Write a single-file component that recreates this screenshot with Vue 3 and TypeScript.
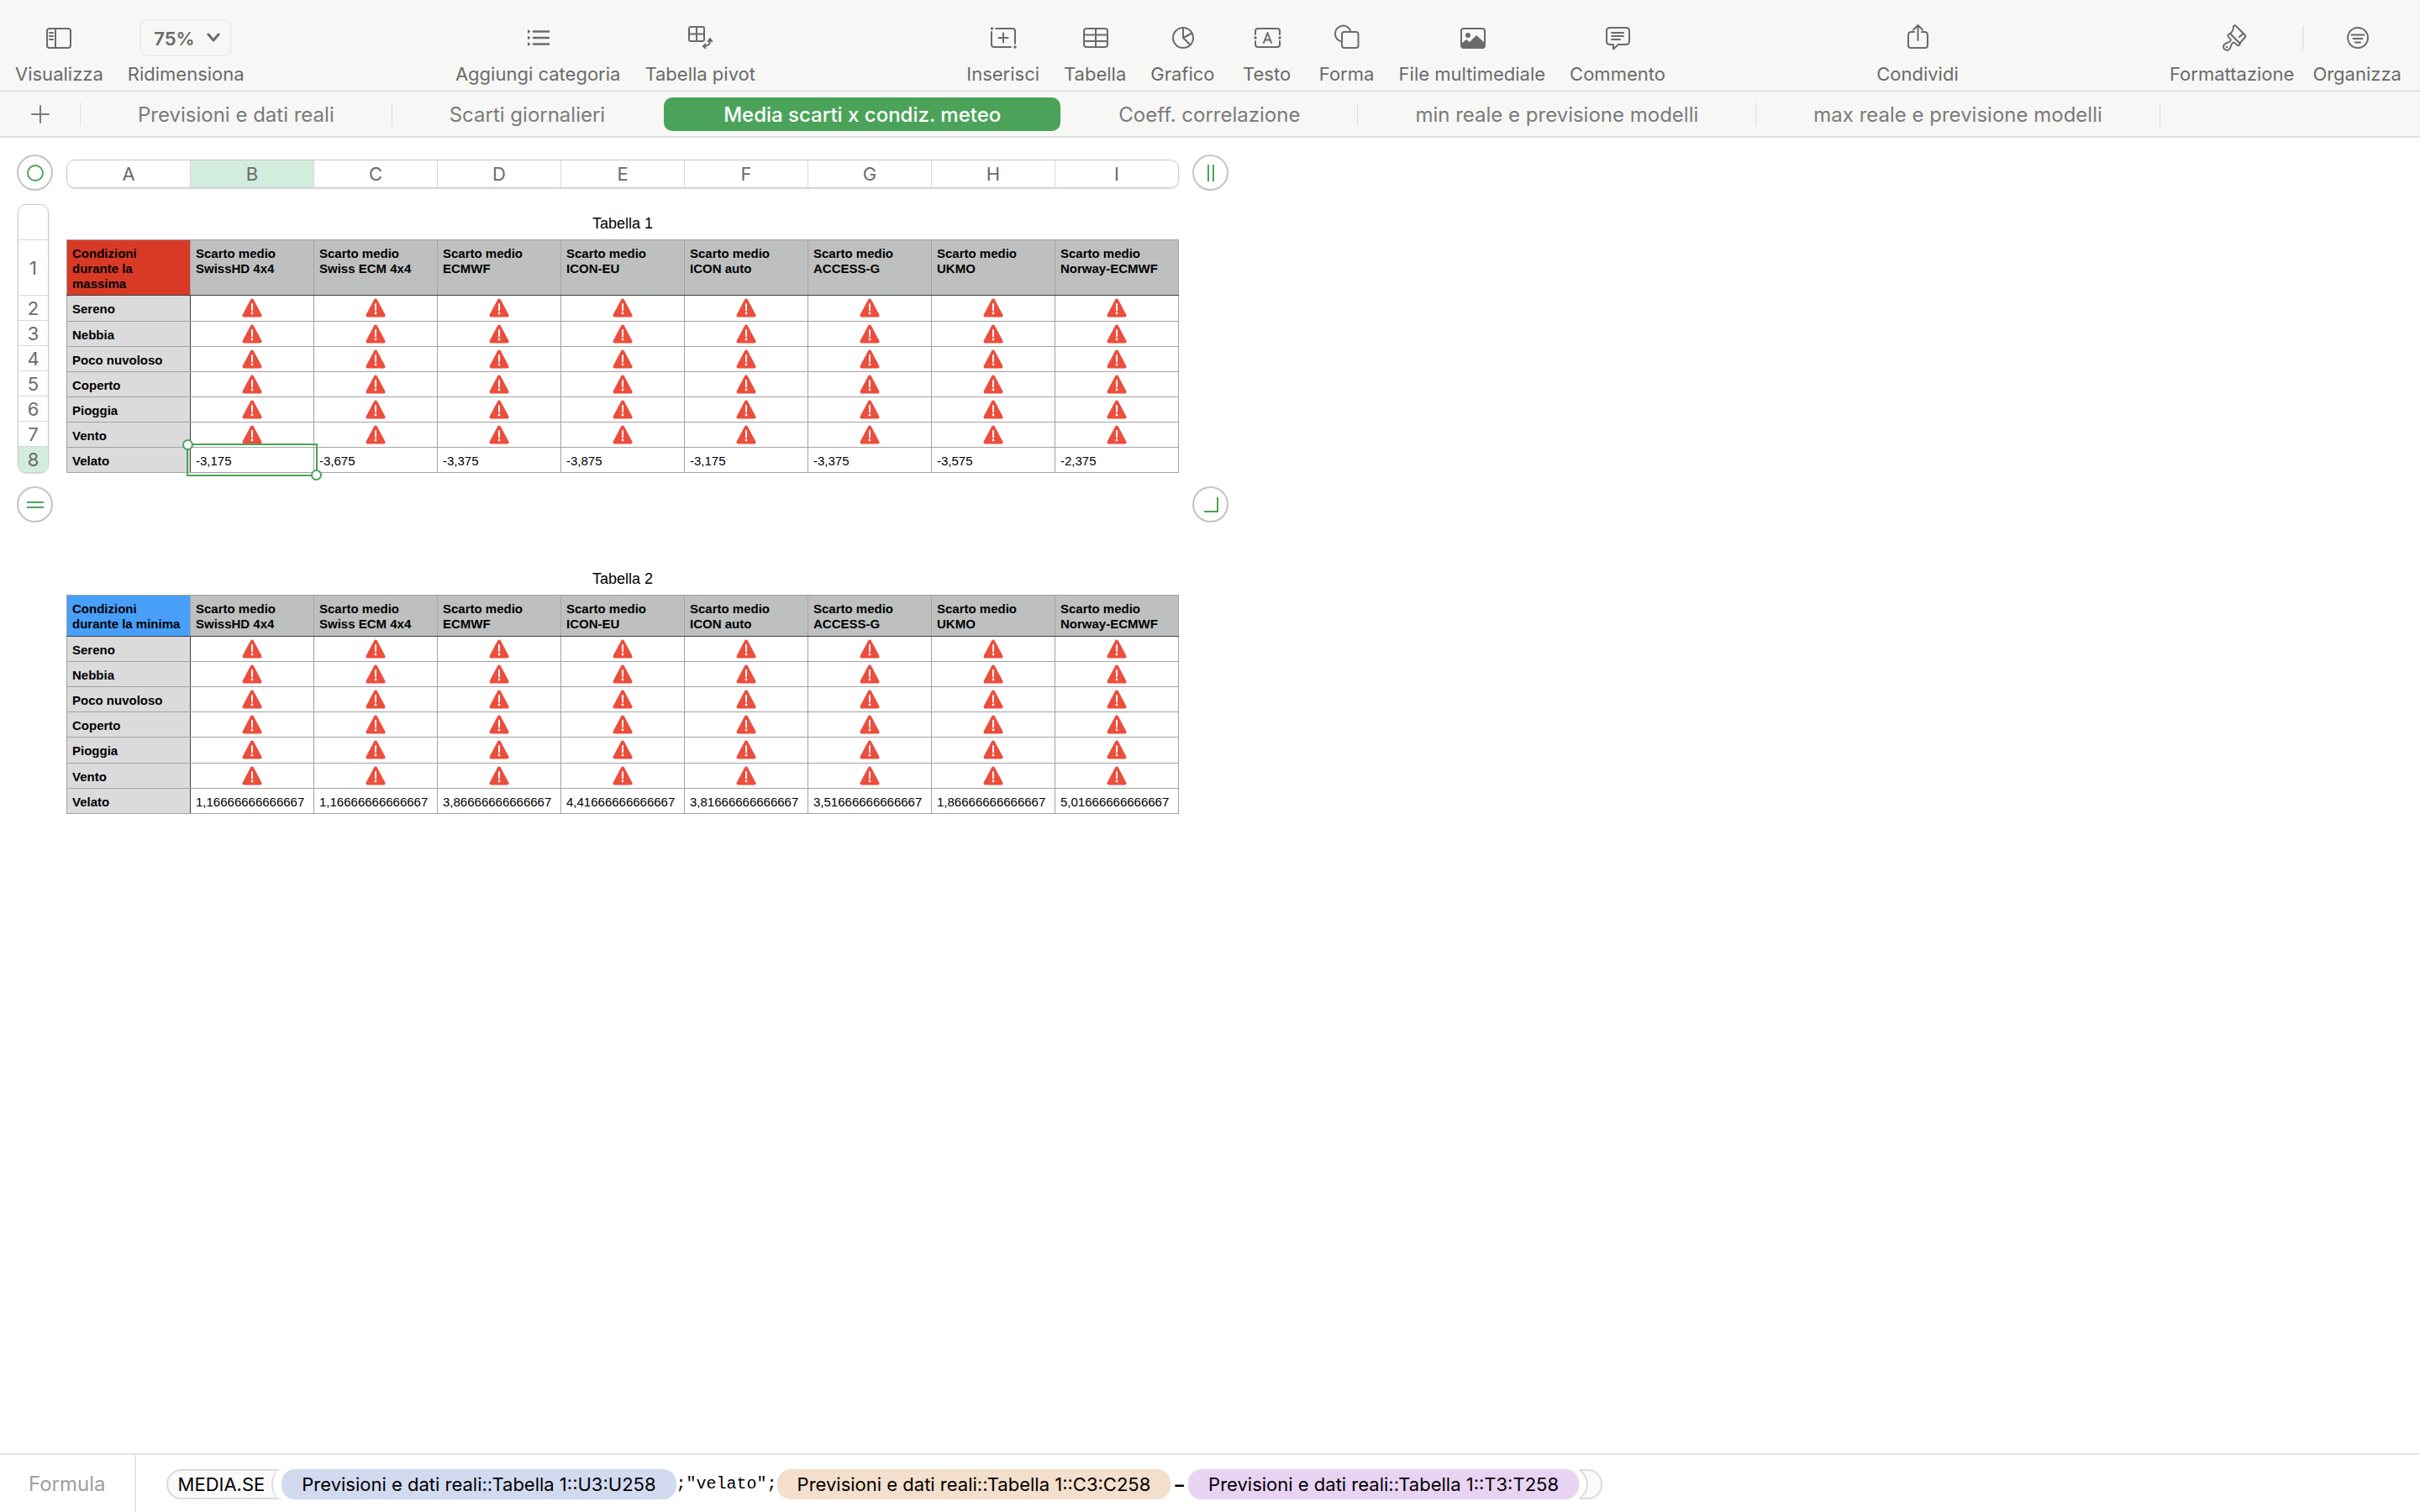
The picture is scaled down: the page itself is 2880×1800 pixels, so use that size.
<script setup lang="ts">
import { ref } from 'vue'

interface Sheet {
  id: string
  name: string
}

interface DataTable {
  title: string
  corner: string
  tone: 'red' | 'blue'
  tallRow: string
  values: string[]
  selected: number
}

type ToolIcon =
  | 'list' | 'pivot' | 'insert' | 'table' | 'chart' | 'text' | 'shape'
  | 'media' | 'comment' | 'share'

interface Tool {
  icon: ToolIcon
  label: string
}

const toolGroups: Tool[][] = [
  [
    { icon: 'list', label: 'Aggiungi categoria' },
    { icon: 'pivot', label: 'Tabella pivot' },
  ],
  [
    { icon: 'insert', label: 'Inserisci' },
    { icon: 'table', label: 'Tabella' },
    { icon: 'chart', label: 'Grafico' },
    { icon: 'text', label: 'Testo' },
    { icon: 'shape', label: 'Forma' },
    { icon: 'media', label: 'File multimediale' },
    { icon: 'comment', label: 'Commento' },
  ],
  [{ icon: 'share', label: 'Condividi' }],
]

const sheets: Sheet[] = [
  { id: 'previsioni', name: 'Previsioni e dati reali' },
  { id: 'scarti', name: 'Scarti giornalieri' },
  { id: 'media', name: 'Media scarti x condiz. meteo' },
  { id: 'coeff', name: 'Coeff. correlazione' },
  { id: 'min', name: 'min reale e previsione modelli' },
  { id: 'max', name: 'max reale e previsione modelli' },
]
const activeSheet = ref('media')
const zoom = ref('75%')

const columns = ['A', 'B', 'C', 'D', 'E', 'F', 'G', 'H', 'I']
const rows = ['', '1', '2', '3', '4', '5', '6', '7', '8']

const models = [
  'SwissHD 4x4', 'Swiss ECM 4x4', 'ECMWF', 'ICON-EU',
  'ICON auto', 'ACCESS-G', 'UKMO', 'Norway-ECMWF',
]
const conditions = ['Sereno', 'Nebbia', 'Poco nuvoloso', 'Coperto', 'Pioggia', 'Vento']

const tables: DataTable[] = [
  {
    title: 'Tabella 1',
    corner: 'Condizioni durante la massima',
    tone: 'red',
    tallRow: 'Sereno',
    values: ['-3,175', '-3,675', '-3,375', '-3,875', '-3,175', '-3,375', '-3,575', '-2,375'],
    selected: 0,
  },
  {
    title: 'Tabella 2',
    corner: 'Condizioni durante la minima',
    tone: 'blue',
    tallRow: 'Pioggia',
    values: [
      '1,16666666666667', '1,16666666666667', '3,86666666666667', '4,41666666666667',
      '3,81666666666667', '3,51666666666667', '1,86666666666667', '5,01666666666667',
    ],
    selected: -1,
  },
]
</script>

<template>
  <div class="app">
    <header class="toolbar">
      <div class="group">
        <button class="tool" type="button">
          <svg class="icon" viewBox="0 0 40 40">
            <rect x="6" y="9" width="28" height="23" rx="3" />
            <path d="M16 9v23M9 14h4M9 18h4M9 22h4" />
          </svg>
          <span>Visualizza</span>
        </button>
        <div class="tool">
          <div class="zoom">
            <select id="zoom" v-model="zoom">
              <option>50%</option>
              <option>75%</option>
              <option>100%</option>
            </select>
            <svg class="chevron" viewBox="0 0 16 12"><path d="M2 2l6 7 6-7" /></svg>
          </div>
          <label for="zoom">Ridimensiona</label>
        </div>
      </div>

      <div v-for="(group, g) in toolGroups" :key="g" class="group">
        <button v-for="tool in group" :key="tool.label" class="tool" type="button">
          <svg class="icon" viewBox="0 0 40 40">
            <template v-if="tool.icon === 'list'">
              <path class="thick" d="M15 12.500h18M15 20h18M15 27.500h18" />
              <path class="solid" d="M8 10l3.500 2.500-3.500 2.500zM8 17.500l3.500 2.500-3.500 2.500zM8 25l3.500 2.500-3.500 2.500z" />
            </template>
            <template v-else-if="tool.icon === 'pivot'">
              <rect x="7" y="7" width="18" height="17" rx="2" />
              <path d="M16 7v17M7 15.500h18M32 21v3q0 6-8 6" />
              <path d="M29 24l3-3.500 3 3.500zM26.500 27l-3.500 3 3.500 3z" class="head" />
            </template>
            <template v-else-if="tool.icon === 'insert'">
              <path d="M11 9h20q3 0 3 3v15M29 31H9q-3 0-3-3V13M14.500 20h11M20 14.500v11" />
              <circle class="solid" cx="6.500" cy="9" r="1.700" />
              <circle class="solid" cx="34" cy="31" r="1.700" />
            </template>
            <template v-else-if="tool.icon === 'table'">
              <rect x="7" y="9" width="28" height="22" rx="3" />
              <path d="M21 9v22M7 16.500h28M7 24h28" />
            </template>
            <template v-else-if="tool.icon === 'chart'">
              <circle cx="21" cy="20" r="12" />
              <path d="M21 8v12l10.500-5.500M21 20l8.500 8.500" />
            </template>
            <template v-else-if="tool.icon === 'text'">
              <path d="M6 16v-4q0-3 3-3h23q3 0 3 3v4M6 24v4q0 3 3 3h23q3 0 3-3v-4" />
              <path d="M16 26l4.500-12 4.500 12M17.500 22.500h6" />
              <circle class="solid" cx="6" cy="20" r="1.700" />
              <circle class="solid" cx="35" cy="20" r="1.700" />
            </template>
            <template v-else-if="tool.icon === 'shape'">
              <path d="M14 24.500a9.500 9.500 0 1 1 10.500-12" />
              <rect x="14" y="13" width="19.500" height="19" rx="3" />
            </template>
            <template v-else-if="tool.icon === 'media'">
              <rect x="7" y="9" width="28" height="23" rx="3" />
              <circle class="solid" cx="15" cy="17" r="3" />
              <path class="solid" d="M7 27l6-5 4 3 8-8 10 9v3q0 3-3 3H10q-3 0-3-3z" />
            </template>
            <template v-else-if="tool.icon === 'comment'">
              <path d="M11 8h19q4 0 4 4v12q0 4-4 4h-9l-6 5.500V28h-4q-4 0-4-4V12q0-4 4-4z" />
              <path d="M13 14h14M13 18h14M13 22h10" />
            </template>
            <template v-else>
              <path d="M16 13h-3q-4 0-4 4v12q0 3 3 3h17q3 0 3-3V17q0-4-4-4h-3M20.500 23V6M15 10.500L20.500 5l5.500 5.500" />
            </template>
          </svg>
          <span>{{ tool.label }}</span>
        </button>
      </div>

      <div class="group panels">
        <button class="tool" type="button">
          <svg class="icon" viewBox="0 0 40 40">
            <path d="M18 15q4-3 4-8.500 1-2 2.500-1L36 17q1 1 0 2l-6.500 7.500zM33.500 15l-4.500 4" />
            <path d="M18 15l-2.500 1.500q-.5 1 0 1.500L19 22.500q-1 3-6 4-3.500 2-3 5 1.500 4 6 3 2.500-2 3-5 1.500-4 3.500-4l4.500 3.500q1 .5 2-.5l1-2" />
            <circle class="solid" cx="14" cy="31" r="1.300" />
          </svg>
          <span>Formattazione</span>
        </button>
        <span class="rule"></span>
        <button class="tool" type="button">
          <svg class="icon" viewBox="0 0 40 40">
            <circle cx="21" cy="20" r="12" />
            <path d="M13.500 16.500h15M15.500 21h11M18 25.500h6" />
          </svg>
          <span>Organizza</span>
        </button>
      </div>
    </header>

    <nav class="tabs" aria-label="Fogli">
      <button class="add" type="button" aria-label="Aggiungi foglio">
        <svg viewBox="0 0 22 22"><path d="M11 1v20M1 11h20" /></svg>
      </button>
      <button
        v-for="sheet in sheets"
        :key="sheet.id"
        type="button"
        class="tab"
        :class="{ active: sheet.id === activeSheet }"
        @click="activeSheet = sheet.id"
      >
        {{ sheet.name }}
      </button>
    </nav>

    <main class="canvas">
      <button class="knob" type="button" aria-label="Seleziona tabella">
        <svg viewBox="0 0 42 42"><circle cx="21" cy="21" r="9" /></svg>
      </button>
      <div class="col-heads">
        <button v-for="c in columns" :key="c" type="button" :class="{ on: c === 'B' }">{{ c }}</button>
      </div>
      <button class="knob" type="button" aria-label="Aggiungi colonne">
        <svg viewBox="0 0 42 42"><path d="M18 11v20M24 11v20" /></svg>
      </button>

      <div class="row-heads">
        <button v-for="r in rows" :key="r" type="button" :class="{ on: r === '8' }">{{ r }}</button>
      </div>
      <table v-for="t in tables" :key="t.title" :class="['sheet-table', t.tone]">
        <caption>{{ t.title }}</caption>
        <thead>
          <tr>
            <th class="corner" scope="col">{{ t.corner }}</th>
            <th v-for="m in models" :key="m" scope="col">Scarto medio<br />{{ m }}</th>
          </tr>
        </thead>
        <tbody>
          <tr v-for="c in conditions" :key="c" :class="{ tall: c === t.tallRow }">
            <th scope="row">{{ c }}</th>
            <td v-for="m in models" :key="m" class="error">
              <svg class="warn" viewBox="0 0 24 23" role="img" aria-label="Errore">
                <path class="tri" d="M12 2.500L21.500 20.500H2.500z" />
                <path class="bang" d="M12 7v7.500" />
                <circle cx="12" cy="18" r="1.400" />
              </svg>
            </td>
          </tr>
          <tr>
            <th scope="row">Velato</th>
            <td v-for="(v, i) in t.values" :key="i" :class="{ selected: i === t.selected }">
              {{ v }}
              <span v-if="i === t.selected" class="selection"><i></i><i></i></span>
            </td>
          </tr>
        </tbody>
      </table>

      <button class="knob add-rows" type="button" aria-label="Aggiungi righe">
        <svg viewBox="0 0 42 42"><path d="M11 18h20M11 24h20" /></svg>
      </button>
      <button class="knob resize" type="button" aria-label="Ridimensiona tabella">
        <svg viewBox="0 0 42 42"><path d="M13 29h16V12" /></svg>
      </button>
    </main>

    <footer class="formula">
      <span class="formula-label">Formula</span>
      <div class="expression">
        <span class="fn">MEDIA.SE</span>
        <span class="token blue">Previsioni e dati reali::Tabella 1::U3:U258</span>
        <code>;"velato";</code>
        <span class="token orange">Previsioni e dati reali::Tabella 1::C3:C258</span>
        <span class="minus">−</span>
        <span class="token purple">Previsioni e dati reali::Tabella 1::T3:T258</span>
        <svg class="close" viewBox="0 0 28 36">
          <path d="M1 1h10a16 17 0 0 1 0 34H1Q10 28 10 18T1 1z" />
        </svg>
      </div>
    </footer>
  </div>
</template>

<style>
body {
  margin: 0;
  background: #fff;
}
</style>

<style scoped>
.app {
  display: flex;
  flex-direction: column;
  min-height: 100vh;
  font-family: Inter, "Liberation Sans", sans-serif;
  font-size: 22px;
  line-height: 26px;
  color: #6b6b6a;
}

button,
select {
  margin: 0;
  padding: 0;
  border: 0;
  background: none;
  font: inherit;
  color: inherit;
}

svg {
  display: block;
  fill: none;
  stroke: currentColor;
  stroke-width: 2;
  stroke-linecap: round;
  stroke-linejoin: round;
}

.solid {
  fill: currentColor;
  stroke: none;
}

.head {
  fill: currentColor;
  stroke-width: 1;
}

.thick {
  stroke-width: 2.5;
}

/* Toolbar */
.toolbar {
  display: flex;
  justify-content: space-between;
  padding: 25px 22px 7px 18px;
  border-bottom: 1px solid #cbcbca;
  background: #f7f7f5;
}

.group {
  display: flex;
  gap: 29px;
}

.tool {
  display: flex;
  flex-direction: column;
  align-items: center;
  gap: 10px;
  min-width: 66px;
  white-space: nowrap;
}

.icon {
  width: 40px;
  height: 40px;
}

.zoom {
  position: relative;
  display: flex;
  align-items: center;
  height: 40px;
}

.zoom select {
  appearance: none;
  width: 110px;
  height: 44px;
  padding: 2px 15px 0;
  border: 2px solid #ececea;
  border-radius: 10px;
  font-weight: 600;
}

.chevron {
  position: absolute;
  right: 14px;
  width: 16px;
  height: 12px;
  stroke-width: 3;
  pointer-events: none;
}

.panels {
  gap: 10px;
}

.rule {
  width: 2px;
  height: 28px;
  margin-top: 6px;
  background: #e6e6e4;
}

/* Sheet tabs */
.tabs {
  display: flex;
  align-items: center;
  height: 53px;
  border-bottom: 2px solid #dededd;
  background: #f7f7f5;
  font-size: 24px;
  color: #7b7b7a;
}

.add {
  display: flex;
  align-items: center;
  justify-content: center;
  width: 95px;
  height: 28px;
}

.add svg {
  width: 22px;
  height: 22px;
}

.tab {
  height: 28px;
  padding: 2px 68px 0;
  border-left: 1px solid #dcdcdb;
  white-space: nowrap;
}

.tab:last-child {
  border-right: 1px solid #dcdcdb;
}

.tab.active {
  height: 40px;
  margin-left: 2px;
  padding: 2px 71px 0;
  border: 0;
  border-radius: 10px;
  background: #4ba35a;
  font-weight: 500;
  color: #fff;
}

.tab.active + .tab {
  border-left-color: transparent;
}

/* Canvas */
.canvas {
  flex: 1;
  display: grid;
  grid-template-columns: 43px 1324px 43px;
  align-content: start;
  gap: 16px;
  padding: 20px;
}

.knob {
  display: flex;
  align-items: center;
  justify-content: center;
  width: 43px;
  height: 43px;
  border: 2px solid #c4c4c4;
  border-radius: 50%;
  background: #fff;
  color: #4ba35a;
}

.knob svg {
  flex: none;
  width: 42px;
  height: 42px;
  stroke-linecap: butt;
  stroke-linejoin: miter;
}

.col-heads {
  display: flex;
  align-self: center;
  height: 34px;
  margin-top: 2px;
  box-sizing: border-box;
  border: 1px solid #c9c9c9;
  border-radius: 10px;
  box-shadow: 0 1px 2px #00000026;
  overflow: hidden;
}

.col-heads button {
  flex: 1;
}

.col-heads button + button {
  border-left: 1px solid #d8d8d8;
}

.row-heads {
  display: flex;
  flex-direction: column;
  box-sizing: border-box;
  width: 37px;
  height: 320px;
  margin-left: 1px;
  border: 1px solid #c9c9c9;
  border-radius: 10px;
  box-shadow: 0 1px 2px #00000026;
  overflow: hidden;
}

.row-heads button {
  flex: 0 0 30px;
  box-sizing: border-box;
  border-bottom: 1px solid #d8d8d8;
}

.row-heads button:first-child {
  flex-basis: 42px;
}

.row-heads button:nth-child(2) {
  flex-basis: 66px;
}

.row-heads button:last-child {
  border-bottom: 0;
}

.on {
  background: #d2ecde;
}

/* Tables */
.sheet-table {
  grid-column: 2;
  width: 100%;
  table-layout: fixed;
  border-collapse: collapse;
  font-family: "Liberation Sans", Arial, sans-serif;
  font-size: 15px;
  line-height: 18px;
  color: #000;
}

.sheet-table.red {
  grid-row: 2;
}

.sheet-table.blue {
  grid-row: 4;
  margin-top: 28px;
}

.add-rows {
  grid-area: 3 / 1;
}

.resize {
  grid-area: 3 / 3;
}

caption {
  padding: 13px 0 9px;
  font-size: 18px;
  line-height: 20px;
}

th,
td {
  height: 18px;
  padding: 7px 6px 4px;
  border: 1px solid #a3a3a3;
  text-align: left;
  vertical-align: top;
}

.tall th {
  height: 19px;
}

thead th {
  padding-bottom: 5px;
  border-bottom-color: #3f3f3f;
  background: #bec0bf;
}

.sheet-table.red thead th {
  padding-bottom: 4px;
}

.red .corner {
  background: #d93a26;
}

.blue .corner {
  background: #479ff8;
}

tbody th {
  border-right-color: #3f3f3f;
  background: #dbdbdb;
}

.error {
  padding: 3px 0;
}

.warn {
  width: 24px;
  height: 23px;
  margin: 0 auto;
}

.tri {
  fill: #ec4e3d;
  stroke: #ec4e3d;
  stroke-width: 4;
}

.bang {
  stroke: #fff;
}

.warn circle {
  fill: #fff;
  stroke: none;
}

.selected {
  position: relative;
}

.selection {
  position: absolute;
  inset: -5px;
  border: 2px solid #4ba35a;
}

.selection i {
  position: absolute;
  top: -7px;
  left: -7px;
  width: 9px;
  height: 9px;
  border: 2px solid #4ba35a;
  border-radius: 50%;
  background: #fff;
}

.selection i + i {
  inset: auto -7px -7px auto;
}

/* Formula bar */
.formula {
  display: flex;
  align-items: stretch;
  height: 68px;
  border-top: 2px solid #e5e5e5;
  color: #000;
}

.formula-label {
  display: flex;
  align-items: center;
  padding: 2px 34px 0;
  border-right: 2px solid #e5e5e5;
  font-size: 24px;
  color: #a0a0a0;
}

.expression {
  display: flex;
  align-items: center;
  padding: 2px 36px 0;
  white-space: nowrap;
}

.fn {
  position: relative;
  box-sizing: border-box;
  height: 36px;
  padding: 3px 20px 0 12px;
  border: 2px solid #dcdcdc;
  border-right: 0;
  border-radius: 18px 0 0 18px;
  background: #fafafa;
}

.fn::after {
  content: "";
  position: absolute;
  top: -2px;
  right: 0;
  width: 10px;
  height: 36px;
  border-left: 2px solid #dcdcdc;
  border-radius: 12px 0 0 12px / 18px 0 0 18px;
  background: #fff;
}

.token {
  height: 31px;
  padding: 5px 24px 0;
  border-radius: 16px;
}

.token.blue {
  background: #d2daf0;
}

.token.orange {
  background: #f3dfcb;
}

.token.purple {
  background: #e9d3f3;
}

code {
  font-family: "Liberation Mono", monospace;
  font-size: 20px;
}

.minus {
  padding: 0 3px;
  font-weight: 600;
}

.close {
  width: 28px;
  height: 36px;
  fill: #fafafa;
  stroke: #dcdcdc;
}
</style>
